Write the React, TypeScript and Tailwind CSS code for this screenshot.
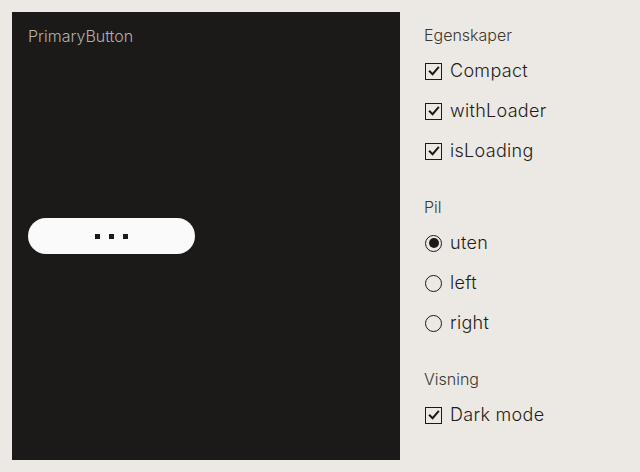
import React from "react";

function Check() {
  return (
    <span className="flex h-[17px] w-[17px] items-center justify-center border-[1.5px] border-[#1b1a18] bg-transparent">
      <svg width="12" height="12" viewBox="0 0 12 12" fill="none">
        <path d="M1.8 6.4 L4.6 9.2 L10.2 2.6" stroke="#1b1a18" strokeWidth="2" strokeLinecap="square" />
      </svg>
    </span>
  );
}

function Radio({ on }: { on?: boolean }) {
  return (
    <span className="flex h-[17px] w-[17px] items-center justify-center rounded-full border-[1.5px] border-[#1b1a18]">
      {on && <span className="h-[10px] w-[10px] rounded-full bg-[#1b1a18]" />}
    </span>
  );
}

function Row({ icon, label }: { icon: React.ReactNode; label: string }) {
  return (
    <div className="flex h-10 items-center gap-[8px] pl-[1px]">
      {icon}
      <span className="text-[18px] font-light leading-none tracking-[0.3px] text-[#1f1d1b]">{label}</span>
    </div>
  );
}

function Heading({ children }: { children: React.ReactNode }) {
  return <div className="mb-[5px] h-[22px] text-[16px] font-light leading-[22px] text-[#3a3835]">{children}</div>;
}

export default function App() {
  return (
    <div
      className="flex h-[472px] w-[640px] gap-[24px] bg-[#ece8e3] p-[12px]"
      style={{ fontFamily: "Inter, 'Liberation Sans', sans-serif" }}
    >
      <div className="flex h-[448px] w-[388px] flex-col bg-[#1b1a18] px-4 pt-[13px]">
        <div className="text-[16px] font-light leading-[22px] text-[#b3afa9]">PrimaryButton</div>
        <div className="mt-[171px] flex h-[36px] w-[167px] items-center justify-center gap-[9px] rounded-full bg-[#fafafa]">
          <span className="h-[5px] w-[5px] bg-[#1b1a18]" />
          <span className="h-[5px] w-[5px] bg-[#1b1a18]" />
          <span className="h-[5px] w-[5px] bg-[#1b1a18]" />
        </div>
      </div>
      <div className="flex flex-col pt-[12px]">
        <Heading>Egenskaper</Heading>
        <Row icon={<Check />} label="Compact" />
        <Row icon={<Check />} label="withLoader" />
        <Row icon={<Check />} label="isLoading" />
        <div className="mt-[25px]">
          <Heading>Pil</Heading>
        </div>
        <Row icon={<Radio on />} label="uten" />
        <Row icon={<Radio />} label="left" />
        <Row icon={<Radio />} label="right" />
        <div className="mt-[25px]">
          <Heading>Visning</Heading>
        </div>
        <Row icon={<Check />} label="Dark mode" />
      </div>
    </div>
  );
}
